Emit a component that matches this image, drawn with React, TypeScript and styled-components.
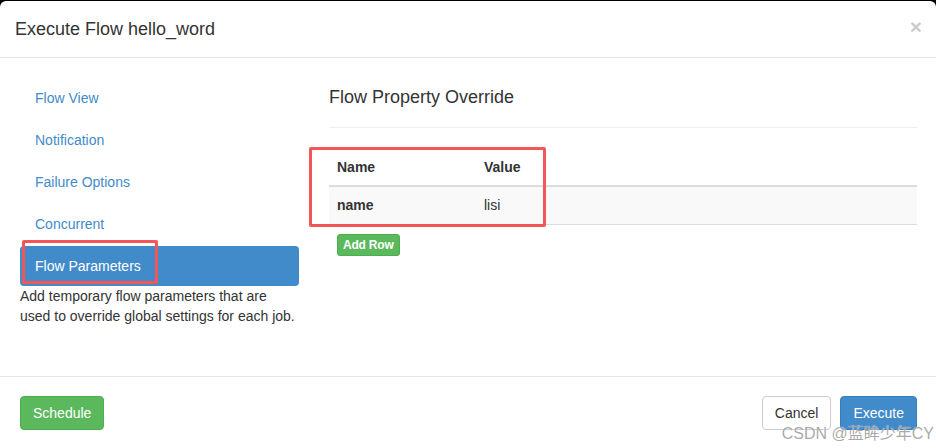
import React from "react";
import styled, { createGlobalStyle } from "styled-components";

const Global = createGlobalStyle`
  html, body { margin: 0; padding: 0; background: #000; }
  body { font-family: "Liberation Sans", Arial, Helvetica, sans-serif; font-size: 14px; line-height: 20px; color: #333; }
  * { box-sizing: border-box; }
`;

const Modal = styled.div`
  position: relative;
  margin-top: 1px;
  width: 936px;
  height: 447px;
  background: #fff;
  border-radius: 6px 6px 0 0;
  display: flex;
  flex-direction: column;
  overflow: hidden;
`;

const Header = styled.div`
  display: flex;
  align-items: center;
  justify-content: space-between;
  height: 57px;
  padding: 0 15px;
  border-bottom: 1px solid #e5e5e5;
`;

const Title = styled.h4`
  margin: 0;
  font-size: 18px;
  font-weight: 400;
  line-height: 25px;
  color: #333;
  padding-top: 1px;
`;

const Close = styled.span`
  font-size: 21px;
  font-weight: 700;
  line-height: 1;
  color: #000;
  opacity: 0.2;
  margin-top: -6px;
  margin-right: -1px;
`;

const Body = styled.div`
  height: 319px;
  padding: 20px 19px 20px 20px;
  display: grid;
  grid-template-columns: 279px 1fr;
  column-gap: 30px;
  border-bottom: 1px solid #e5e5e5;
`;

const Nav = styled.ul`
  list-style: none;
  margin: 0;
  padding: 0;
  display: flex;
  flex-direction: column;
  gap: 2px;
`;

const NavItem = styled.li<{ $active?: boolean }>`
  height: 40px;
  padding: 10px 15px;
  border-radius: 4px;
  color: ${(p) => (p.$active ? "#fff" : "#428bca")};
  background: ${(p) => (p.$active ? "#428bca" : "transparent")};
`;

const Help = styled.p`
  margin: 0;
  color: #333;
`;

const SectionTitle = styled.h3`
  margin: 0;
  padding: 9px 0 20px;
  font-size: 18px;
  font-weight: 400;
  line-height: 20px;
  color: #333;
  border-bottom: 1px solid #eee;
`;

const Table = styled.table`
  width: 100%;
  margin-top: 20px;
  border-collapse: collapse;
`;

const Th = styled.th<{ $w?: number }>`
  text-align: left;
  padding: 8px;
  height: 38px;
  font-weight: 700;
  border-bottom: 2px solid #ddd;
  width: ${(p) => (p.$w ? `${p.$w}px` : "auto")};
`;

const Tr = styled.tr`
  background: #f9f9f9;
`;

const Td = styled.td<{ $bold?: boolean }>`
  padding: 8px;
  height: 38px;
  font-weight: ${(p) => (p.$bold ? 700 : 400)};
  border-bottom: 1px solid #ddd;
`;

const Button = styled.button<{ $variant: "success" | "primary" | "default"; $small?: boolean }>`
  font-family: "Liberation Sans", Arial, sans-serif;
  font-size: ${(p) => (p.$small ? "12px" : "14px")};
  line-height: ${(p) => (p.$small ? "18px" : "20px")};
  padding: ${(p) => (p.$small ? "1px 5px" : "6px 12px")};
  border-radius: ${(p) => (p.$small ? "3px" : "4px")};
  font-weight: ${(p) => (p.$small ? 700 : 400)};
  letter-spacing: ${(p) => (p.$small ? "-0.2px" : "0")};
  border: 1px solid
    ${(p) => (p.$variant === "success" ? "#4cae4c" : p.$variant === "primary" ? "#357ebd" : "#ccc")};
  background: ${(p) => (p.$variant === "success" ? "#5cb85c" : p.$variant === "primary" ? "#428bca" : "#fff")};
  color: ${(p) => (p.$variant === "default" ? "#333" : "#fff")};
`;

const AddRowWrap = styled.div`
  margin-top: 9px;
  padding-left: 8px;
`;

const Footer = styled.div`
  flex: 1;
  display: flex;
  align-items: flex-start;
  justify-content: space-between;
  padding: 19px 19px 0 20px;
`;

const Right = styled.div`
  display: flex;
  gap: 9px;
`;

const Annotation = styled.div<{ $x: number; $y: number; $w: number; $h: number }>`
  position: absolute;
  left: ${(p) => p.$x}px;
  top: ${(p) => p.$y}px;
  width: ${(p) => p.$w}px;
  height: ${(p) => p.$h}px;
  border: 3px solid #f25656;
  border-radius: 2px;
  pointer-events: none;
`;

const Watermark = styled.div`
  position: absolute;
  right: 2px;
  bottom: 4px;
  font-family: "Liberation Sans", "Noto Sans CJK SC", sans-serif;
  font-size: 16px;
  line-height: 20px;
  color: rgba(140, 140, 140, 0.75);
  text-shadow: 0 0 1px #fff;
`;

const items = ["Flow View", "Notification", "Failure Options", "Concurrent", "Flow Parameters"];

export default function App() {
  return (
    <>
      <Global />
      <Modal>
        <Header>
          <Title>Execute Flow hello_word</Title>
          <Close>×</Close>
        </Header>
        <Body>
          <div>
            <Nav>
              {items.map((it) => (
                <NavItem key={it} $active={it === "Flow Parameters"}>
                  {it}
                </NavItem>
              ))}
            </Nav>
            <Help>
              Add temporary flow parameters that are
              <br />
              used to override global settings for each job.
            </Help>
          </div>
          <div>
            <SectionTitle>Flow Property Override</SectionTitle>
            <Table>
              <thead>
                <tr>
                  <Th $w={147}>Name</Th>
                  <Th>Value</Th>
                </tr>
              </thead>
              <tbody>
                <Tr>
                  <Td $bold>name</Td>
                  <Td>lisi</Td>
                </Tr>
              </tbody>
            </Table>
            <AddRowWrap>
              <Button $variant="success" $small>
                Add Row
              </Button>
            </AddRowWrap>
          </div>
        </Body>
        <Footer>
          <Button $variant="success">Schedule</Button>
          <Right>
            <Button $variant="default">Cancel</Button>
            <Button $variant="primary">Execute</Button>
          </Right>
        </Footer>
        <Annotation $x={22} $y={239} $w={136} $h={44} />
        <Annotation $x={309} $y={146} $w={237} $h={80} />
        <Watermark>CSDN @蓝眸少年CY</Watermark>
      </Modal>
    </>
  );
}
